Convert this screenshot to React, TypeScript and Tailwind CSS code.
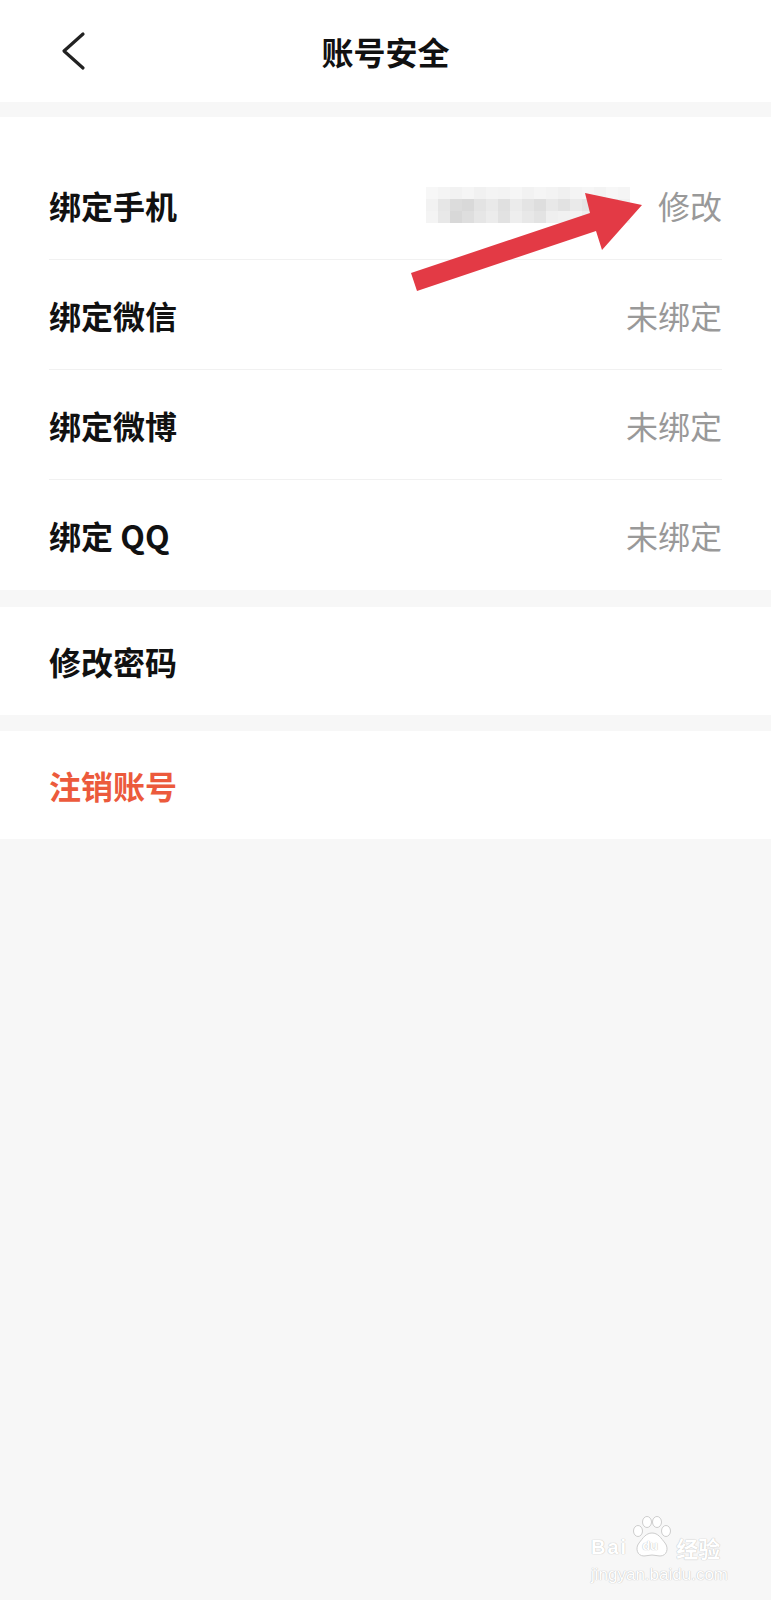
const cjk = 'font-["Noto_Sans_CJK_SC","Noto_Sans",sans-serif]';

const mosaic = [
  ['#f7f7f7', '#f4f4f4', '#f2f2f2', '#f5f5f5', '#f1f1f1', '#f4f4f4', '#f3f3f3', '#f6f6f6', '#f2f2f2', '#f5f5f5', '#f3f3f3', '#f0f0f0', '#f4f4f4', '#f6f6f6', '#f3f3f3', '#f7f7f7', '#f5f5f5'],
  ['#f2f2f2', '#e6e6e6', '#dcdcdc', '#d9d9d9', '#e3e3e3', '#e9e9e9', '#e0e0e0', '#ebebeb', '#e4e4e4', '#dedede', '#e8e8e8', '#e2e2e2', '#eaeaea', '#e5e5e5', '#dddddd', '#e7e7e7', '#f0f0f0'],
  ['#f4f4f4', '#e8e8e8', '#d8d8d8', '#dedede', '#e6e6e6', '#ececec', '#e2e2e2', '#eeeeee', '#e8e8e8', '#e3e3e3', '#efefef', '#f1f1f1', '#f3f3f3', '#eeeeee', '#e9e9e9', '#f2f2f2', '#f6f6f6'],
];

function BlurredNumber() {
  return (
    <div className="grid gap-0">
      {mosaic.map((row, r) => (
        <div key={r} className="flex">
          {row.map((c, i) => (
            <div key={i} className="h-[12px] w-[12px]" style={{ backgroundColor: c }} />
          ))}
        </div>
      ))}
    </div>
  );
}

function Row({ label, value, last, extra }: { label: string; value?: string; last?: boolean; extra?: React.ReactNode }) {
  return (
    <div className={`flex h-[110px] items-center justify-between ${last ? '' : 'border-b border-[#f1f1f1]'}`}>
      <span className="text-[32px] font-bold text-[#111]">{label}</span>
      <div className="flex items-center gap-[28px]">
        {extra}
        {value ? <span className="text-[32px] text-[#999]">{value}</span> : null}
      </div>
    </div>
  );
}

function BaiduMark() {
  const outline = '[text-shadow:0_0_1px_#c4c4c4,0_0_1px_#c4c4c4]';
  return (
    <div className="pointer-events-none absolute left-[591px] top-[1516px] flex flex-col items-start">
      <div className="flex items-end">
        <span className={`mb-[1px] text-[20px] font-bold leading-none tracking-[2px] text-white ${outline} font-["Liberation_Sans",sans-serif]`}>Bai</span>
        <div className="relative mx-[1px] h-[42px] w-[46px]">
          <svg width="46" height="42" viewBox="0 0 46 42" className="absolute inset-0">
            <g fill="#fff" stroke="#cdcdcd" strokeWidth="1">
              <ellipse cx="9" cy="15" rx="4.5" ry="5.5" />
              <ellipse cx="18" cy="6" rx="4.5" ry="5.5" />
              <ellipse cx="28" cy="6" rx="4.5" ry="5.5" />
              <ellipse cx="37" cy="15" rx="4.5" ry="5.5" />
              <path d="M23 17c6 0 9 5 13 10 4 5 2 13-5 13-3 0-5-1-8-1s-5 1-8 1c-7 0-9-8-5-13 4-5 7-10 13-10z" />
            </g>
          </svg>
          <span className={`absolute left-[13px] top-[23px] text-[13px] font-bold leading-none text-white ${outline} font-["Liberation_Sans",sans-serif]`}>du</span>
        </div>
        <span className={`text-[22px] font-bold leading-none text-white ${outline} ${cjk}`}>经验</span>
      </div>
      <span className={`mt-[8px] text-[17px] leading-none text-white ${outline} font-["Liberation_Sans",sans-serif]`}>jingyan.baidu.com</span>
    </div>
  );
}

export default function App() {
  return (
    <div className={`relative min-h-[1600px] w-full bg-[#f7f7f7] ${cjk}`}>
      <header className="grid h-[102px] grid-cols-[1fr_auto_1fr] items-center bg-white">
        <div className="pl-[60px]">
          <svg width="28" height="40" viewBox="0 0 28 40">
            <polyline points="23,3 4,20 23,37" fill="none" stroke="#222" strokeWidth="3.2" strokeLinecap="round" strokeLinejoin="round" />
          </svg>
        </div>
        <h1 className="text-[32px] font-bold text-[#111]">账号安全</h1>
        <div />
      </header>

      <section className="mt-[15px] bg-white px-[49px] pt-[33px]">
        <Row label="绑定手机" value="修改" extra={<BlurredNumber />} />
        <Row label="绑定微信" value="未绑定" />
        <Row label="绑定微博" value="未绑定" />
        <Row label="绑定 QQ" value="未绑定" last />
      </section>

      <section className="mt-[17px] flex h-[108px] items-center bg-white px-[49px]">
        <span className="text-[32px] font-bold text-[#111]">修改密码</span>
      </section>

      <section className="mt-[16px] flex h-[108px] items-center bg-white px-[49px]">
        <span className="text-[32px] font-bold text-[#ec5a3c]">注销账号</span>
      </section>

      <svg className="pointer-events-none absolute left-0 top-0" width="771" height="320" viewBox="0 0 771 320">
        <polygon points="411,273 590,213 585,193 642,205 602,250 596,231 417,291" fill="#e33a45" />
      </svg>

      <BaiduMark />
    </div>
  );
}
